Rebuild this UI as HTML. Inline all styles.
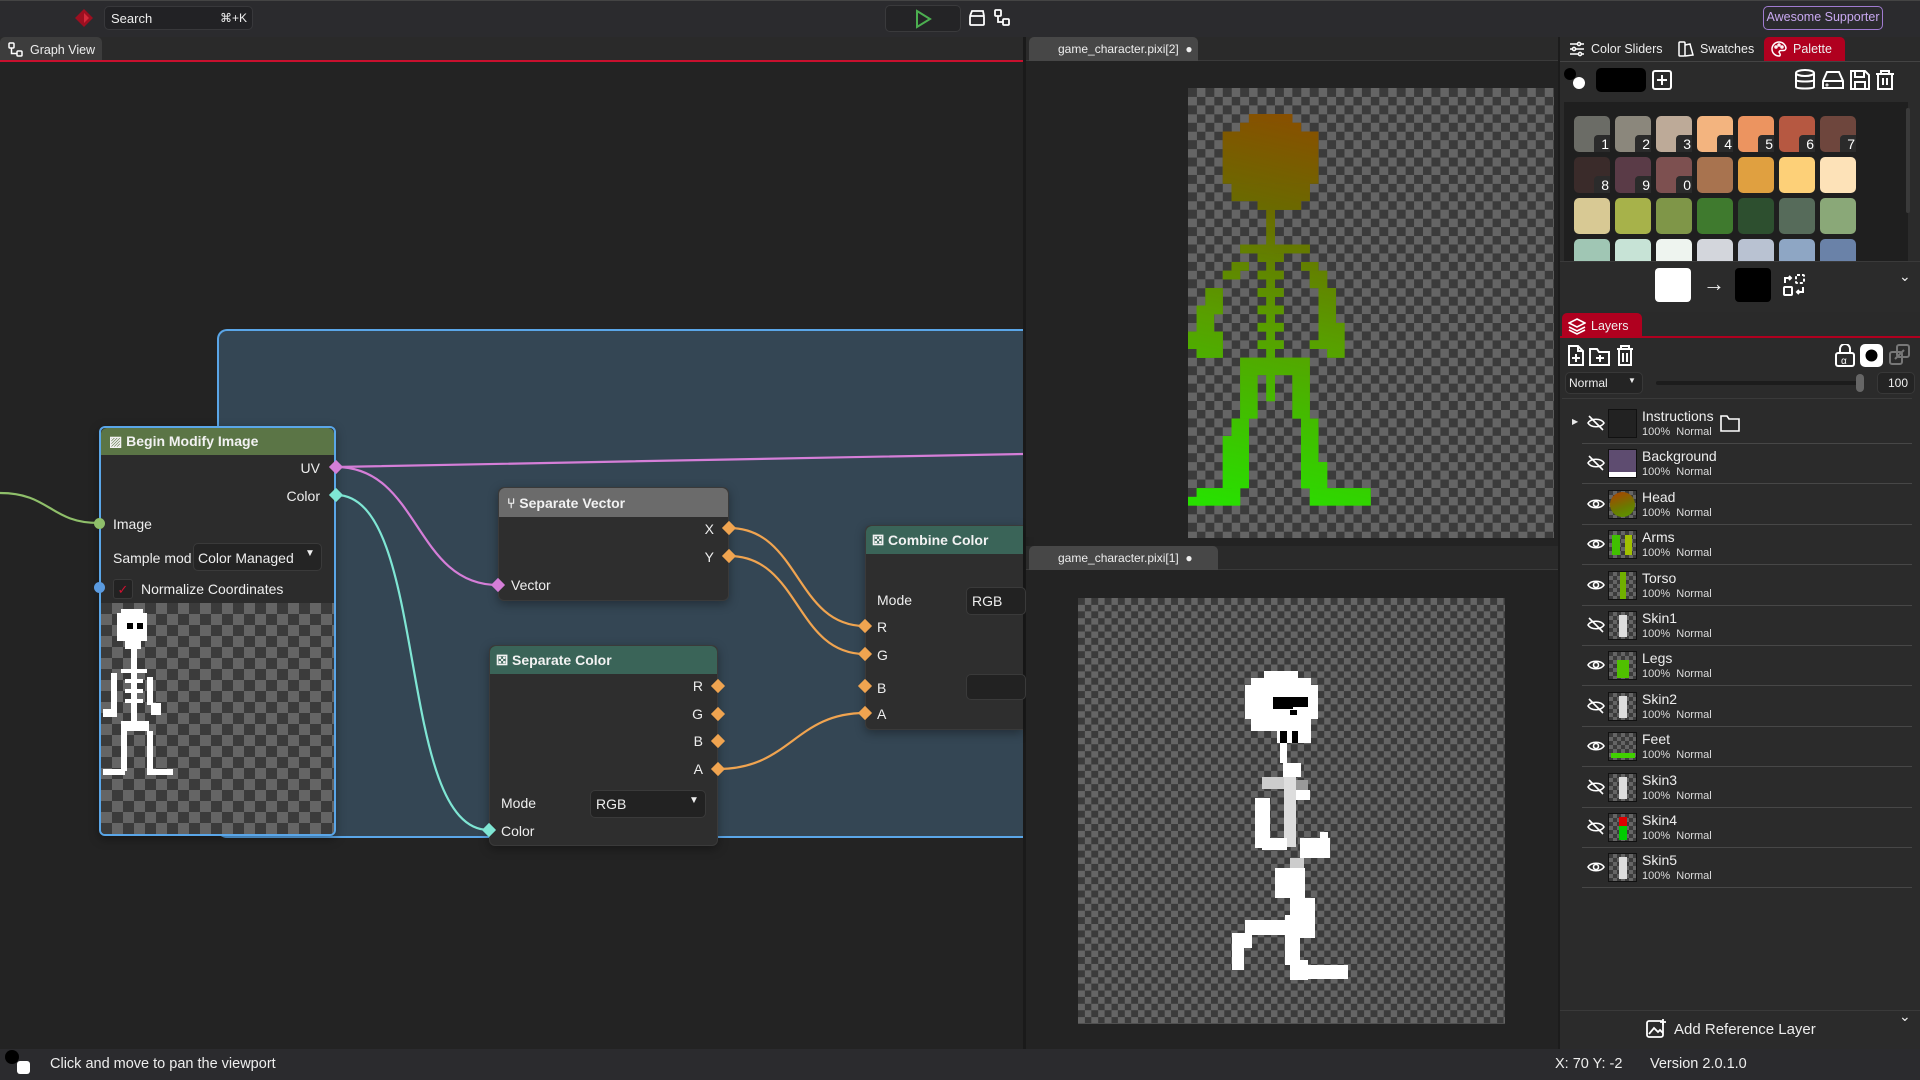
<!DOCTYPE html>
<html><head><meta charset="utf-8"><style>
*{box-sizing:border-box;margin:0;padding:0}
body{width:1920px;height:1080px;overflow:hidden;background:#232323;font-family:"Liberation Sans",sans-serif;color:#e8e8e8;position:relative}
.a{position:absolute}
.chk{background-color:#3b3b3b;background-image:conic-gradient(#656565 25%,transparent 25% 50%,#656565 50% 75%,transparent 75%);}
.node{position:absolute;background:#2e2e2e;border-radius:6px;box-shadow:0 3px 10px rgba(0,0,0,.35)}
.nh{position:absolute;left:0;right:0;top:0;border-radius:6px 6px 0 0;font-weight:bold;font-size:14px;color:#f2f2f2;padding-left:12px;display:flex;align-items:center}
.t{position:absolute;font-size:14px;color:#eee;white-space:nowrap}
.dia{position:absolute;width:10px;height:10px;transform:rotate(45deg)}
.sw{position:absolute;width:36px;height:36px;border-radius:5px}
.num{position:absolute;right:0;bottom:0;width:16px;height:17px;background:#2b2b2b;border-radius:4px 0 0 0;color:#fff;font-size:14px;text-align:right;padding-right:1px;line-height:18px}
.row{position:absolute;left:1582px;width:330px;height:40px;border-bottom:1px solid #474747}
.row .th{position:absolute;left:26px;top:5px;width:29px;height:29px;border:1px solid #111;overflow:hidden}
.row .nm{position:absolute;left:60px;top:4px;font-size:14px;color:#eee}
.row .sb{position:absolute;left:60px;top:22px;font-size:11px;color:#ddd}
.row svg{position:absolute;left:5px;top:11px}
</style></head><body>
<!-- top bar -->
<div class="a" style="left:0;top:0;width:1920px;height:37px;background:#2b2b2e;border-top:1px solid #444"></div>
<svg class="a" style="left:74px;top:8px" width="20" height="20"><path d="M10 1 L19 10 L10 19 L1 10Z" fill="#9c0f20"/><path d="M10 5 L15 10 L10 15Z" fill="#d42a3b"/></svg>
<div class="a" style="left:104px;top:6px;width:149px;height:24px;background:#222225;border-radius:5px;border:1px solid #38383b"></div>
<div class="t" style="left:111px;top:11px;font-size:13px">Search</div>
<div class="t" style="left:220px;top:11px;font-size:12px">⌘+K</div>
<div class="a" style="left:885px;top:5px;width:76px;height:27px;background:#242426;border-radius:5px;border:1px solid #3a3a3c"></div>
<svg class="a" style="left:914px;top:9px" width="18" height="20"><path d="M3 2 L16 10 L3 18Z" fill="none" stroke="#4caf50" stroke-width="2"/></svg>
<svg class="a" style="left:968px;top:9px" width="18" height="18" fill="none" stroke="#fff" stroke-width="1.8"><rect x="2" y="7" width="14" height="9" rx="1"/><path d="M2 7 L4 2 L15 2 L16 7"/></svg>
<svg class="a" style="left:993px;top:8px" width="18" height="20" fill="none" stroke="#fff" stroke-width="1.8"><rect x="2" y="2" width="6" height="6" rx="1"/><rect x="10" y="11" width="6" height="6" rx="1"/><path d="M5 8 V14 H10"/></svg>
<div class="a" style="left:1763px;top:6px;width:120px;height:24px;border:1.5px solid #a07bd0;border-radius:5px;color:#c8a8f0;font-size:12.5px;text-align:center;line-height:21px">Awesome Supporter</div>

<!-- graph view -->
<div class="a" style="left:0;top:37px;width:1024px;height:24px;background:#2a2a2a"></div>
<div class="a" style="left:0;top:37px;width:102px;height:24px;background:#3d3d3d;border-radius:5px 5px 0 0"></div>
<svg class="a" style="left:8px;top:42px" width="16" height="16" fill="none" stroke="#fff" stroke-width="1.5"><rect x="1" y="1" width="5" height="5" rx="1"/><rect x="9" y="9" width="5" height="5" rx="1"/><path d="M3.5 6 V11.5 H9"/></svg>
<div class="t" style="left:30px;top:43px;font-size:12.5px">Graph View</div>
<div class="a" style="left:0;top:60px;width:1024px;height:2px;background:#c8102e"></div>
<div class="a" style="left:1023px;top:37px;width:3px;height:1012px;background:#1a1a1a"></div>

<!-- frame -->
<div class="a" style="left:217px;top:329px;width:806px;height:509px;background:#344654;border:2px solid #5aa6e8;border-right:none;border-radius:10px 0 0 10px"></div>

<svg class="a" style="left:0;top:0" width="1023" height="1080" fill="none" stroke-width="2.2">
<path d="M0 493 C50 493 50 523 99 523" stroke="#8fbf6a"/>
<path d="M336 467 C600 462 800 458 1023 454" stroke="#d57ed8"/>
<path d="M336 467 C420 467 414 585 498 585" stroke="#d57ed8"/>
<path d="M336 495 C430 495 395 830 489 830" stroke="#7fe6d4"/>
<path d="M729 528 C800 528 795 626 865 626" stroke="#f0a450"/>
<path d="M729 556 C800 556 795 654 865 654" stroke="#f0a450"/>
<path d="M718 769 C790 769 795 713 865 713" stroke="#f0a450"/>
</svg>

<!-- Begin Modify Image -->
<div class="node" style="left:99px;top:426px;width:237px;height:410px;border:2px solid #5aa6e8;background:#2c2c2c">
 <div class="nh" style="height:27px;background:#5b7546;padding-left:8px">▨&nbsp;Begin Modify Image</div>
 <div class="t" style="right:14px;top:32px">UV</div>
 <div class="t" style="right:14px;top:60px">Color</div>
 <div class="t" style="left:12px;top:88px">Image</div>
 <div class="t" style="left:12px;top:122px">Sample mod</div>
 <div class="a" style="left:92px;top:115px;width:129px;height:28px;background:#242424;border-radius:5px;border:1px solid #3a3a3a"></div>
 <div class="t" style="left:97px;top:122px">Color Managed</div>
 <div class="t" style="left:204px;top:120px;font-size:10px">▼</div>
 <div class="a" style="left:12px;top:151px;width:20px;height:20px;background:#222;border-radius:3px;border:1px solid #3a3a3a;color:#d01030;font-size:13px;text-align:center;line-height:19px">✓</div>
 <div class="t" style="left:40px;top:153px">Normalize Coordinates</div>
 <div class="a chk" style="left:0;top:175px;width:233px;height:231px;background-size:22px 22px;border-radius:0 0 4px 4px"></div>
 <svg class="a" style="left:0;top:175px" width="233" height="231" fill="#fff">
  <rect x="16" y="10" width="30" height="28"/><rect x="20" y="6" width="22" height="4"/><rect x="24" y="38" width="16" height="8"/>
  <rect x="30" y="46" width="6" height="80"/><rect x="20" y="66" width="26" height="4"/><rect x="24" y="76" width="18" height="4"/><rect x="24" y="86" width="18" height="4"/><rect x="24" y="96" width="18" height="4"/>
  <rect x="10" y="70" width="6" height="40"/><rect x="2" y="106" width="14" height="8"/><rect x="46" y="74" width="6" height="28"/><rect x="50" y="100" width="10" height="12"/>
  <rect x="20" y="118" width="28" height="10"/><rect x="20" y="128" width="6" height="40"/><rect x="46" y="128" width="6" height="40"/><rect x="2" y="166" width="22" height="6"/><rect x="46" y="166" width="26" height="6"/>
  <rect x="26" y="20" width="6" height="6" fill="#000"/><rect x="36" y="20" width="6" height="6" fill="#000"/>
 </svg>
</div>
<div class="dia" style="left:331px;top:462px;background:#d57ed8"></div>
<div class="dia" style="left:331px;top:490px;background:#7fe6d4"></div>
<div class="a" style="left:94px;top:518px;width:11px;height:11px;border-radius:50%;background:#8fbf6a"></div>
<div class="a" style="left:94px;top:582px;width:11px;height:11px;border-radius:50%;background:#5b9be0"></div>

<!-- Separate Vector -->
<div class="node" style="left:498px;top:487px;width:231px;height:114px;border:1px solid #3a3a3a">
 <div class="nh" style="height:29px;background:#6b6b6b;padding-left:8px">⑂&nbsp;Separate Vector</div>
 <div class="t" style="right:14px;top:33px">X</div>
 <div class="t" style="right:14px;top:61px">Y</div>
 <div class="t" style="left:12px;top:89px">Vector</div>
</div>
<div class="dia" style="left:724px;top:523px;background:#f0a450"></div>
<div class="dia" style="left:724px;top:551px;background:#f0a450"></div>
<div class="dia" style="left:493px;top:580px;background:#d57ed8"></div>

<!-- Separate Color -->
<div class="node" style="left:489px;top:645px;width:229px;height:201px;border:1px solid #3a3a3a">
 <div class="nh" style="height:28px;background:#3a6458;padding-left:6px">⚄&nbsp;Separate Color</div>
 <div class="t" style="right:14px;top:32px">R</div>
 <div class="t" style="right:14px;top:60px">G</div>
 <div class="t" style="right:14px;top:87px">B</div>
 <div class="t" style="right:14px;top:115px">A</div>
 <div class="t" style="left:11px;top:149px">Mode</div>
 <div class="a" style="left:100px;top:144px;width:116px;height:28px;background:#222;border-radius:5px;border:1px solid #3a3a3a"></div>
 <div class="t" style="left:106px;top:150px">RGB</div>
 <div class="t" style="left:199px;top:149px;font-size:10px">▼</div>
 <div class="t" style="left:11px;top:177px">Color</div>
</div>
<div class="dia" style="left:713px;top:681px;background:#f0a450"></div>
<div class="dia" style="left:713px;top:709px;background:#f0a450"></div>
<div class="dia" style="left:713px;top:736px;background:#f0a450"></div>
<div class="dia" style="left:713px;top:764px;background:#f0a450"></div>
<div class="dia" style="left:484px;top:825px;background:#7fe6d4"></div>

<!-- Combine Color -->
<div class="node" style="left:865px;top:525px;width:158px;height:205px;border-radius:6px 0 0 6px;border:1px solid #3a3a3a;border-right:none">
 <div class="nh" style="height:28px;background:#3a6458;border-radius:6px 0 0 0;padding-left:6px">⚄&nbsp;Combine Color</div>
 <div class="t" style="left:11px;top:66px">Mode</div>
 <div class="a" style="left:100px;top:61px;width:60px;height:28px;background:#222;border-radius:5px;border:1px solid #3a3a3a"></div>
 <div class="t" style="left:106px;top:67px">RGB</div>
 <div class="t" style="left:11px;top:93px">R</div>
 <div class="t" style="left:11px;top:121px">G</div>
 <div class="t" style="left:11px;top:154px">B</div>
 <div class="a" style="left:100px;top:148px;width:60px;height:26px;background:#222;border-radius:5px;border:1px solid #3a3a3a"></div>
 <div class="t" style="left:11px;top:180px">A</div>
</div>
<div class="dia" style="left:860px;top:621px;background:#f0a450"></div>
<div class="dia" style="left:860px;top:649px;background:#f0a450"></div>
<div class="dia" style="left:860px;top:681px;background:#f0a450"></div>
<div class="dia" style="left:860px;top:708px;background:#f0a450"></div>

<!-- viewport 1 -->
<div class="a" style="left:1026px;top:37px;width:532px;height:500px;background:#232323"></div>
<div class="a" style="left:1026px;top:37px;width:532px;height:24px;background:#2a2a2a;border-bottom:1px solid #3a3a3a"></div>
<div class="a" style="left:1029px;top:37px;width:169px;height:24px;background:#474747;border-radius:5px 5px 0 0"></div>
<div class="t" style="left:1058px;top:42px;font-size:12px">game_character.pixi[2] &nbsp;●</div>
<div class="a chk" style="left:1188px;top:88px;width:366px;height:450px;background-size:17.4px 17.4px"></div>
<svg class="a" style="left:1188px;top:88px" width="366" height="450">
<defs><linearGradient id="g1" gradientUnits="userSpaceOnUse" x1="14" y1="3" x2="4" y2="48"><stop offset="0" stop-color="#8a4e00"/><stop offset="0.25" stop-color="#6a6a00"/><stop offset="0.55" stop-color="#58a000"/><stop offset="1" stop-color="#28e000"/></linearGradient>
<linearGradient id="g2" gradientUnits="userSpaceOnUse" x1="0" y1="0" x2="21" y2="0"><stop offset="0" stop-color="#10d000" stop-opacity=".35"/><stop offset="0.5" stop-color="#80c000" stop-opacity="0"/><stop offset="1" stop-color="#c0e000" stop-opacity=".45"/></linearGradient></defs>
<g id="sk" transform="scale(8.7)">
<rect x="7" y="3" width="5" height="1"/><rect x="6" y="4" width="7" height="1"/><rect x="4" y="5" width="11" height="6"/><rect x="5" y="11" width="9" height="2"/><rect x="8" y="13" width="5" height="1"/>
<rect x="9" y="14" width="1" height="4"/><rect x="6" y="18" width="8" height="1"/><rect x="8" y="19" width="3" height="1"/><rect x="9" y="20" width="1" height="11"/><rect x="8" y="21" width="3" height="1"/><rect x="8" y="23" width="3" height="1"/><rect x="8" y="25" width="3" height="1"/><rect x="8" y="27" width="3" height="1"/><rect x="8" y="29" width="3" height="1"/>
<rect x="5" y="20" width="2" height="1"/><rect x="4" y="21" width="2" height="1"/><rect x="2" y="23" width="2" height="3"/><rect x="1" y="25" width="2" height="6"/><rect x="0" y="28" width="4" height="2"/><rect x="1" y="30" width="3" height="1"/>
<rect x="13" y="20" width="2" height="1"/><rect x="14" y="21" width="2" height="2"/><rect x="15" y="23" width="2" height="5"/><rect x="15" y="27" width="3" height="3"/><rect x="14" y="29" width="1" height="1"/><rect x="16" y="30" width="2" height="1"/>
<rect x="6" y="31" width="8" height="2"/><rect x="6" y="33" width="2" height="5"/><rect x="9" y="33" width="1" height="3"/><rect x="12" y="33" width="2" height="5"/>
<rect x="5" y="38" width="2" height="8"/><rect x="4" y="40" width="2" height="6"/><rect x="1" y="46" width="5" height="2"/><rect x="0" y="47" width="2" height="1"/>
<rect x="13" y="38" width="2" height="8"/><rect x="13" y="43" width="3" height="3"/><rect x="14" y="46" width="7" height="2"/>
</g>
<use href="#sk" fill="url(#g1)"/>
</svg>
<style>#sk{fill:url(#g1)}</style>

<!-- viewport 2 -->
<div class="a" style="left:1026px;top:546px;width:532px;height:503px;background:#232323"></div>
<div class="a" style="left:1026px;top:546px;width:532px;height:24px;background:#2a2a2a;border-bottom:1px solid #3a3a3a"></div>
<div class="a" style="left:1029px;top:546px;width:189px;height:24px;background:#474747;border-radius:5px 5px 0 0"></div>
<div class="t" style="left:1058px;top:551px;font-size:12px">game_character.pixi[1] &nbsp;●</div>
<div class="a chk" style="left:1078px;top:598px;width:427px;height:426px;background-size:13.3px 13.3px"></div>
<svg class="a" style="left:1078px;top:598px" width="427" height="426" fill="#fff">
<g transform="translate(-1078,-598)">
<rect x="1264" y="671" width="34" height="7"/><rect x="1251" y="678" width="60" height="7"/><rect x="1245" y="685" width="73" height="34"/><rect x="1251" y="719" width="60" height="12"/><rect x="1277" y="731" width="34" height="12"/>
<rect x="1273" y="697" width="20" height="12" fill="#000"/><rect x="1290" y="697" width="18" height="10" fill="#000"/><rect x="1290" y="710" width="7" height="5" fill="#000"/><rect x="1280" y="731" width="7" height="12" fill="#000"/><rect x="1292" y="731" width="6" height="12" fill="#000"/>
<rect x="1280" y="743" width="7" height="20"/><rect x="1283" y="763" width="18" height="14"/><rect x="1262" y="777" width="22" height="12" fill="#ccc"/><rect x="1284" y="777" width="12" height="70" fill="#ddd"/><rect x="1296" y="780" width="12" height="20" fill="#999"/>
<rect x="1255" y="798" width="15" height="50"/><rect x="1262" y="838" width="25" height="12"/><rect x="1296" y="790" width="14" height="10"/>
<rect x="1300" y="838" width="30" height="20"/><rect x="1320" y="832" width="8" height="10"/>
<rect x="1290" y="858" width="14" height="10" fill="#ccc"/><rect x="1275" y="868" width="30" height="30"/><rect x="1290" y="898" width="25" height="40"/><rect x="1285" y="915" width="15" height="50"/>
<rect x="1245" y="920" width="45" height="15"/><rect x="1232" y="933" width="20" height="15"/><rect x="1232" y="945" width="12" height="25"/><rect x="1290" y="960" width="18" height="20"/><rect x="1290" y="965" width="58" height="14"/>
</g></svg>

<!-- right panel -->
<div class="a" style="left:1558px;top:37px;width:362px;height:1012px;background:#2b2b2b;border-left:2px solid #1c1c1c"></div>
<div class="a" style="left:1560px;top:37px;width:360px;height:24px;background:#2a2a2a"></div>
<svg class="a" style="left:1569px;top:41px" width="16" height="16" stroke="#fff" stroke-width="1.5" fill="none"><path d="M1 3H15M1 8H15M1 13H15"/><circle cx="10" cy="3" r="1.6" fill="#2a2a2a"/><circle cx="5" cy="8" r="1.6" fill="#2a2a2a"/><circle cx="11" cy="13" r="1.6" fill="#2a2a2a"/></svg>
<div class="t" style="left:1591px;top:42px;font-size:12.5px">Color Sliders</div>
<svg class="a" style="left:1678px;top:41px" width="16" height="16" stroke="#fff" stroke-width="1.5" fill="none"><rect x="1" y="1" width="6" height="14" rx="1"/><path d="M7 4L12 3L15 14L7 15"/></svg>
<div class="t" style="left:1700px;top:42px;font-size:12.5px">Swatches</div>
<div class="a" style="left:1764px;top:37px;width:81px;height:24px;background:#b0001f;border-radius:5px 5px 0 0"></div>
<svg class="a" style="left:1771px;top:41px" width="16" height="16" stroke="#fff" stroke-width="1.5" fill="none"><path d="M8 1a7 7 0 1 0 0 14c1.5 0 1.5-2 .5-3s0-2.5 1.5-2.5h2.5A2.5 2.5 0 0 0 15 7 7 7 0 0 0 8 1z"/><circle cx="5" cy="6" r="1"/><circle cx="8" cy="4" r="1"/><circle cx="11" cy="6" r="1"/></svg>
<div class="t" style="left:1793px;top:42px;font-size:12.5px">Palette</div>
<div class="a" style="left:1560px;top:61px;width:360px;height:1px;background:#444"></div>
<div class="a" style="left:1564px;top:68px;width:12px;height:12px;border-radius:50%;background:#000"></div>
<div class="a" style="left:1573px;top:77px;width:12px;height:12px;border-radius:50%;background:#fff"></div>
<div class="a" style="left:1596px;top:68px;width:50px;height:24px;background:#000;border-radius:5px"></div>
<svg class="a" style="left:1652px;top:70px" width="20" height="20" stroke="#fff" stroke-width="2" fill="none"><rect x="1" y="1" width="18" height="18" rx="2"/><path d="M10 5V15M5 10H15"/></svg>
<svg class="a" style="left:1795px;top:69px" width="104" height="22" stroke="#fff" stroke-width="2" fill="none">
<ellipse cx="10" cy="4" rx="9" ry="3"/><path d="M1 4V18c0 2 18 2 18 0V4M1 11c0 2 18 2 18 0"/>
<path d="M28 12L32 3H44L48 12V19H28Z M28 12H48"/><circle cx="32" cy="16" r=".5"/>
<path d="M56 2H70L74 6V20H56Z M60 2V8H69V2 M60 20V13H70V20"/>
<path d="M81 5H99M86 5V2H94V5M83 5V20H97V5M88 9V16M92 9V16"/>
</svg>
<div class="a" style="left:1564px;top:102px;width:344px;height:159px;background:#1f1f1f"></div>
<div class="a" style="left:1906px;top:108px;width:4px;height:105px;background:#3a3a3a;border-radius:2px"></div>
<div id="pal"></div>
<div class="a" style="left:1560px;top:261px;width:360px;height:48px;background:#2b2b2b;border-top:1px solid #3a3a3a"></div>
<div class="a" style="left:1655px;top:268px;width:36px;height:34px;background:#fff;border-radius:4px"></div>
<div class="t" style="left:1703px;top:271px;font-size:22px">→</div>
<div class="a" style="left:1735px;top:268px;width:36px;height:34px;background:#000;border-radius:4px"></div>
<svg class="a" style="left:1782px;top:273px" width="24" height="24" stroke="#fff" stroke-width="2" fill="none"><rect x="2" y="14" width="8" height="8" rx="1"/><rect x="14" y="2" width="8" height="8" rx="1" stroke-dasharray="3 2"/><path d="M3 10V5H9M7 3L9 5L7 7M21 14V19H15M17 17L15 19L17 21"/></svg>
<div class="t" style="left:1899px;top:268px;font-size:14px">⌄</div>

<!-- layers -->
<div class="a" style="left:1560px;top:312px;width:360px;height:26px;background:#2a2a2a"></div>
<div class="a" style="left:1562px;top:313px;width:80px;height:25px;background:#b0001f;border-radius:5px 5px 0 0"></div>
<svg class="a" style="left:1568px;top:317px" width="18" height="18" stroke="#fff" stroke-width="1.6" fill="none"><path d="M9 2L17 6L9 10L1 6Z"/><path d="M1 10L9 14L17 10M1 13L9 17L17 13"/></svg>
<div class="t" style="left:1591px;top:319px;font-size:12.5px">Layers</div>
<div class="a" style="left:1560px;top:336px;width:360px;height:2px;background:#b0001f"></div>
<svg class="a" style="left:1566px;top:344px" width="80" height="24" stroke="#fff" stroke-width="2" fill="none">
<path d="M3 2H12L17 7V21H3Z M12 2V7H17 M10 10V18M6 14H14"/>
<path d="M24 5H31L33 8H43V21H24Z M34 11V18M30 14H38"/>
<path d="M51 5H67M55 5V2H63V5M53 5V21H65V5M57 9V18M61 9V18"/>
</svg>
<svg class="a" style="left:1834px;top:344px" width="80" height="24" stroke="#fff" stroke-width="2" fill="none">
<rect x="2" y="9" width="18" height="13" rx="2"/><path d="M6 9V5a5 5 0 0 1 10 0V9"/><text x="7" y="20" fill="#fff" stroke="none" font-size="10" font-family="Liberation Sans">α</text>
<rect x="27" y="1" width="21" height="21" rx="4" fill="#fff"/><circle cx="37.5" cy="11.5" r="6" fill="#000" stroke="none"/>
<g stroke="#777"><rect x="56" y="8" width="12" height="12" rx="2"/><rect x="63" y="1" width="12" height="12" rx="2"/><path d="M61 15L70 6"/></g>
</svg>
<div class="a" style="left:1565px;top:372px;width:78px;height:22px;background:#242424;border-radius:5px;border:1px solid #383838"></div>
<div class="t" style="left:1569px;top:376px;font-size:12px">Normal</div>
<div class="t" style="left:1628px;top:376px;font-size:8px">▼</div>
<div class="a" style="left:1656px;top:381px;width:205px;height:4px;background:#1c1c1c;border-radius:2px"></div>
<div class="a" style="left:1856px;top:374px;width:8px;height:18px;background:#666;border-radius:4px"></div>
<div class="a" style="left:1877px;top:372px;width:38px;height:22px;background:#242424;border-radius:5px;border:1px solid #383838"></div>
<div class="t" style="left:1888px;top:376px;font-size:12px">100</div>
<div class="a" style="left:1562px;top:398px;width:350px;height:1px;background:#3a3a3a"></div>
<div id="layers"></div>

<div class="a" style="left:1560px;top:1010px;width:360px;height:39px;background:#2b2b2b;border-top:1px solid #3a3a3a"></div>
<svg class="a" style="left:1646px;top:1018px" width="22" height="22" stroke="#fff" stroke-width="1.8" fill="none"><rect x="1" y="3" width="16" height="16" rx="2"/><path d="M3 16L8 10L12 14L14 12L17 15"/><path d="M17 1V7M14 4H20"/></svg>
<div class="t" style="left:1674px;top:1021px;font-size:15px">Add Reference Layer</div>
<div class="t" style="left:1899px;top:1008px;font-size:14px">⌄</div>

<!-- status bar -->
<div class="a" style="left:0;top:1049px;width:1920px;height:31px;background:#2b2b2e"></div>
<div class="a" style="left:5px;top:1050px;width:14px;height:14px;border-radius:50%;background:#000"></div>
<div class="a" style="left:17px;top:1061px;width:13px;height:13px;border-radius:3px;background:#fff"></div>
<div class="t" style="left:50px;top:1056px;font-size:14.5px">Click and move to pan the viewport</div>
<div class="t" style="left:1555px;top:1056px;font-size:14.5px">X: 70 Y: -2</div>
<div class="t" style="left:1650px;top:1056px;font-size:14.5px">Version 2.0.1.0</div>

<script>
var cols=[["#6b6c66","#8b877c","#bdaa98","#f3b47f","#ec9460","#b65841","#6e463d"],["#3a2b2a","#5a3b47","#7d5050","#a8734f","#e0a040","#fdd078","#fde2b8"],["#d8c994","#a7b24a","#7f9648","#3f7a2e","#2d4f2f","#566b5a","#8aa878"],["#a0c6b4","#c7e3d6","#eef4ef","#d3d6dc","#b9c2d2","#8ea6c4","#6a82a8"]];
var h="",n=1;
for(var r=0;r<4;r++)for(var c=0;c<7;c++){var y=116+r*41,x=1574+c*41;var hh=r==3?Math.min(36,261-y):36;
h+='<div class="sw" style="left:'+x+'px;top:'+y+'px;height:'+hh+'px;background:'+cols[r][c]+';'+(r==3?'border-radius:5px 5px 0 0':'')+'">'+(n<=10?'<div class="num">'+(n%10)+'</div>':'')+'</div>';n++;}
document.getElementById("pal").innerHTML=h;
var CK='background-color:#3b3b3b;background-image:conic-gradient(#656565 25%,transparent 25% 50%,#656565 50% 75%,transparent 75%);background-size:8px 8px;';
var L=[["Instructions",0,"background:#222",''],["Background",0,"background:#5e4c70",''],["Head",1,CK,'<div style="position:absolute;left:1px;top:1px;width:25px;height:25px;border-radius:50%;background:linear-gradient(160deg,#b04000,#6a7a00 60%,#5a9a00)"></div>'],["Arms",1,CK,'<div style="position:absolute;left:3px;top:4px;width:8px;height:20px;background:#40c000"></div><div style="position:absolute;left:16px;top:4px;width:7px;height:20px;background:#a0c000"></div>'],["Torso",1,CK,'<div style="position:absolute;left:11px;top:0;width:6px;height:28px;background:#70b000"></div>'],["Skin1",0,CK,'<div style="position:absolute;left:10px;top:3px;width:8px;height:22px;background:#ddd"></div>'],["Legs",1,CK,'<div style="position:absolute;left:8px;top:8px;width:12px;height:18px;background:#50c000"></div>'],["Skin2",0,CK,'<div style="position:absolute;left:10px;top:3px;width:8px;height:22px;background:#ddd"></div>'],["Feet",1,CK,'<div style="position:absolute;left:2px;top:20px;width:24px;height:5px;background:#40d000"></div>'],["Skin3",0,CK,'<div style="position:absolute;left:10px;top:3px;width:8px;height:22px;background:#ddd"></div>'],["Skin4",0,CK,'<div style="position:absolute;left:10px;top:3px;width:8px;height:22px;background:#d00"></div><div style="position:absolute;left:10px;top:12px;width:8px;height:14px;background:#0c0"></div>'],["Skin5",1,CK,'<div style="position:absolute;left:10px;top:3px;width:8px;height:22px;background:#ddd"></div>']];
var eo='<svg width="18" height="16" fill="none" stroke="#fff" stroke-width="1.6"><path d="M1 8C4 3 14 3 17 8C14 13 4 13 1 8Z"/><circle cx="9" cy="8" r="2.5"/></svg>';
var ec='<svg width="18" height="16" fill="none" stroke="#fff" stroke-width="1.6"><path d="M1 8C4 3 14 3 17 8C14 13 4 13 1 8Z"/><path d="M2 1L16 15"/></svg>';
h="";
for(var i=0;i<L.length;i++){var t=404+i*40.4;
h+='<div class="row" style="top:'+t+'px">'+(L[i][1]?eo:ec)+'<div class="th" style="'+L[i][2]+'">'+L[i][3]+'</div><div class="nm">'+L[i][0]+'</div><div class="sb">100%&nbsp; Normal</div>'+(i==0?'<svg style="left:138px;top:10px" width="20" height="18" fill="none" stroke="#fff" stroke-width="1.6"><path d="M1 2H7L9 5H19V17H1Z"/></svg><div style="position:absolute;left:-10px;top:13px;font-size:8px">▶</div>':'')+(i==1?'<div style="position:absolute;left:27px;top:28px;width:27px;height:5px;background:#fff"></div>':'')+'</div>';}
document.getElementById("layers").innerHTML=h;
</script>
</body></html>
